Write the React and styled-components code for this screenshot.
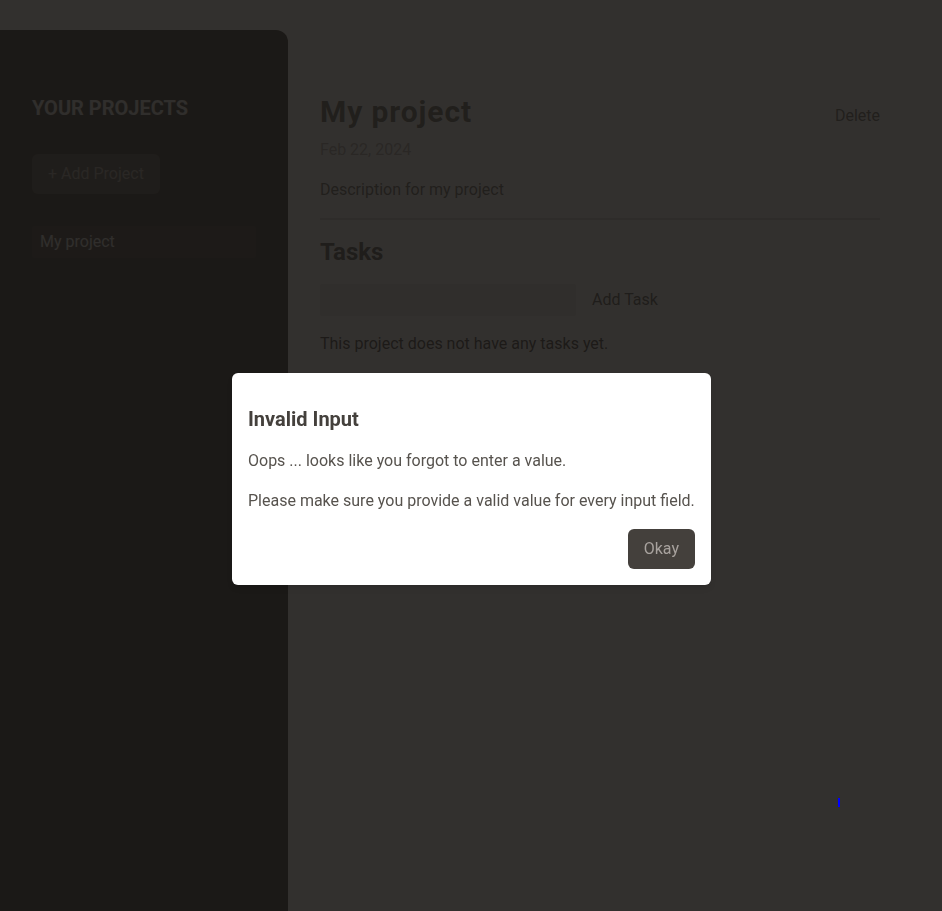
import styled, { createGlobalStyle } from "styled-components";

const GlobalStyle = createGlobalStyle`
  * { box-sizing: border-box; }
  html, body {
    margin: 0;
    background: #ffffff;
    font-family: Roboto, "Liberation Sans", sans-serif;
    overflow: hidden;
  }
`;

const Main = styled.main`
  height: 100vh;
  margin-top: 30px;
  display: flex;
  gap: 32px;
`;

const Sidebar = styled.aside`
  width: 288px;
  flex-shrink: 0;
  padding: 64px 32px;
  background: #1c1917;
  border-radius: 0 12px 12px 0;
`;

const SidebarTitle = styled.h2`
  margin: 0 0 32px;
  font-size: 20px;
  line-height: 28px;
  font-weight: 700;
  text-transform: uppercase;
  color: #e7e5e4;
`;

const Button = styled.button`
  padding: 8px 16px;
  border: none;
  border-radius: 6px;
  background: #44403c;
  color: #a8a29e;
  font-family: inherit;
  font-size: 16px;
  line-height: 24px;
  cursor: pointer;
`;

const ProjectList = styled.ul`
  margin: 32px 0 0;
  padding: 0;
  list-style: none;
`;

const ProjectItem = styled.button`
  display: block;
  width: 100%;
  margin: 4px 0;
  padding: 4px 8px;
  border: none;
  border-radius: 2px;
  text-align: left;
  font-family: inherit;
  font-size: 16px;
  line-height: 24px;
  background: ${(p) => (p.$active ? "#292524" : "transparent")};
  color: ${(p) => (p.$active ? "#e7e5e4" : "#a8a29e")};
`;

const Content = styled.div`
  width: 560px;
  margin-top: 64px;
`;

const Header = styled.header`
  padding-bottom: 16px;
  margin-bottom: 16px;
  border-bottom: 2px solid #d6d3d1;
`;

const TitleRow = styled.div`
  display: flex;
  align-items: center;
  justify-content: space-between;
`;

const ProjectTitle = styled.h1`
  margin: 0 0 8px;
  font-size: 30px;
  line-height: 36px;
  font-weight: 700;
  letter-spacing: 0.03em;
  color: #57534e;
`;

const TextButton = styled.button`
  padding: 0;
  border: none;
  background: none;
  font-family: inherit;
  font-size: 16px;
  line-height: 24px;
  color: ${(p) => p.$color || "#57534e"};
`;

const Text = styled.p`
  margin: ${(p) => p.$margin || "0"};
  font-size: 16px;
  line-height: 24px;
  color: ${(p) => p.$color || "#57534e"};
`;

const SectionTitle = styled.h2`
  margin: 0 0 16px;
  font-size: 24px;
  line-height: 32px;
  font-weight: 700;
  color: #44403c;
`;

const NewTask = styled.div`
  display: flex;
  align-items: center;
  gap: 16px;
`;

const TaskInput = styled.input`
  width: 256px;
  height: 32px;
  padding: 4px 8px;
  border: none;
  border-radius: 2px;
  background: #e7e5e4;
  font-family: inherit;
  font-size: 16px;
`;

const Backdrop = styled.div`
  position: fixed;
  inset: 0;
  background: rgba(28, 25, 23, 0.9);
`;

const Dialog = styled.div`
  position: fixed;
  top: 373px;
  left: 232px;
  width: 479px;
  padding: 16px;
  border-radius: 6px;
  background: #ffffff;
  box-shadow: 0 4px 6px -1px rgba(0, 0, 0, 0.1), 0 2px 4px -2px rgba(0, 0, 0, 0.1);
`;

const DialogTitle = styled.h2`
  margin: 16px 0;
  font-size: 20px;
  line-height: 28px;
  font-weight: 700;
  color: #44403c;
`;

const DialogActions = styled.form`
  margin: 16px 0 0;
  text-align: right;
`;

const Caret = styled.span`
  position: fixed;
  left: 838px;
  top: 798px;
  width: 2px;
  height: 9px;
  background: #0000ff;
`;

export default function App() {
  return (
    <>
      <GlobalStyle />
      <Main>
        <Sidebar>
          <SidebarTitle>Your Projects</SidebarTitle>
          <Button>+ Add Project</Button>
          <ProjectList>
            <li>
              <ProjectItem $active>My project</ProjectItem>
            </li>
          </ProjectList>
        </Sidebar>
        <Content>
          <Header>
            <TitleRow>
              <ProjectTitle>My project</ProjectTitle>
              <TextButton>Delete</TextButton>
            </TitleRow>
            <Text $color="#a8a29e" $margin="0 0 16px">Feb 22, 2024</Text>
            <Text>Description for my project</Text>
          </Header>
          <section>
            <SectionTitle>Tasks</SectionTitle>
            <NewTask>
              <TaskInput type="text" />
              <TextButton $color="#44403c">Add Task</TextButton>
            </NewTask>
            <Text $color="#292524" $margin="16px 0">
              This project does not have any tasks yet.
            </Text>
          </section>
        </Content>
      </Main>
      <Backdrop />
      <Dialog>
        <DialogTitle>Invalid Input</DialogTitle>
        <Text $margin="0 0 16px">Oops ... looks like you forgot to enter a value.</Text>
        <Text $margin="0 0 16px">
          Please make sure you provide a valid value for every input field.
        </Text>
        <DialogActions>
          <Button type="button">Okay</Button>
        </DialogActions>
      </Dialog>
      <Caret />
    </>
  );
}
